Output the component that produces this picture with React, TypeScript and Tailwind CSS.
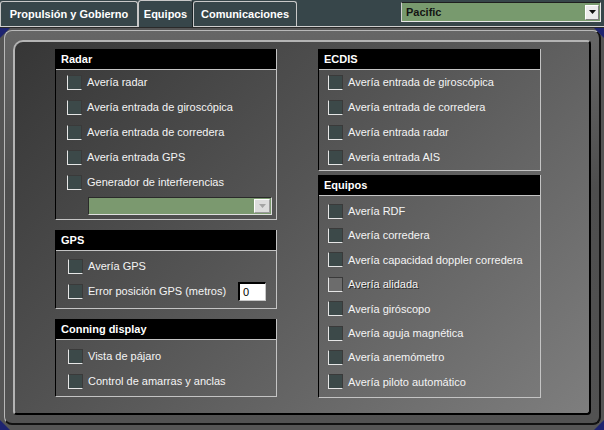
import type { ReactNode } from 'react'

const FONT = "font-['Liberation_Sans',Arial,sans-serif]"

function Tab({ label, width, active }: { label: string; width: string; active?: boolean }) {
  return (
    <div
      className={`relative flex items-center justify-center rounded-t-[3px] border-l border-t border-[#c8c8c8] text-[11px] font-bold text-white ${width} ${
        active
          ? 'z-10 -mb-[1px] h-[27px] border-r border-r-[#1c2426] bg-[#37464a]'
          : 'h-[25px] border-r bg-[#37464a]'
      }`}
    >
      {label}
    </div>
  )
}

function Check({ label, h = 'h-[25px]', dim }: { label: string; h?: string; dim?: boolean }) {
  return (
    <div className={`flex items-center ${h}`}>
      <span
        className={`h-[15px] w-[15px] shrink-0 border border-t-[#3a3a3a] border-r-[#3a3a3a] border-b-[#e6e6e6] border-l-[#e6e6e6] ${
          dim ? 'bg-[#6c6c6c]' : 'bg-[#3c4949]'
        }`}
      />
      <span
        className={`ml-[5px] text-[11px] text-[#f4f4f4] ${dim ? '[text-shadow:1px_1px_0_#2a2a2a]' : ''}`}
      >
        {label}
      </span>
    </div>
  )
}

function Group({ title, className, children }: { title: string; className?: string; children: ReactNode }) {
  return (
    <div className={`border-r border-b border-l border-r-[#c4c4c4] border-b-[#c4c4c4] border-l-black ${className ?? ''}`}>
      <div className="flex h-[21px] items-center border-b border-[#c4c4c4] bg-black pl-[5px] text-[11px] font-bold text-white">
        {title}
      </div>
      {children}
    </div>
  )
}

function Corner({ className, points }: { className: string; points: string }) {
  return (
    <svg className={`absolute h-[10px] w-[10px] ${className}`} viewBox="0 0 10 10" aria-hidden="true">
      <polygon points={points} fill="#1e2470" />
    </svg>
  )
}

export default function App() {
  return (
    <div className={`h-[430px] w-[604px] overflow-hidden bg-[#555555] ${FONT}`}>
      {/* tab bar */}
      <div className="h-[28px] bg-[#37464a]">
        <div className="flex h-[26px] items-end">
          <Tab label="Propulsión y Gobierno" width="w-[138px]" />
          <Tab label="Equipos" width="w-[55px]" active />
          <Tab label="Comunicaciones" width="w-[104px]" />
          <div className="mt-[2px] mr-[3px] ml-auto flex h-[20px] w-[200px] items-center self-start border border-t-[#1f1f1f] border-r-[#e8e8e8] border-b-[#e8e8e8] border-l-[#d0d0d0] bg-[#789a6e]">
            <span className="flex-1 pl-[4px] text-[11px] font-bold text-[#141414]">Pacific</span>
            <span className="mr-[1px] flex h-[15px] w-[14px] items-center justify-center border border-t-white border-r-[#808080] border-b-[#808080] border-l-white bg-[#ececec]">
              <svg viewBox="0 0 7 4" className="h-[4px] w-[7px]" aria-hidden="true">
                <polygon points="0,0 7,0 3.5,4" fill="#111" />
              </svg>
            </span>
          </div>
        </div>
        <div className="h-[1px] bg-[#cfcfcf]" />
        <div className="h-[1px] bg-[#2a2a2a]" />
      </div>

      {/* framed area */}
      <div className="relative h-[402px] pt-[2px] pr-[3px] pb-[5px] pl-[4px]">
        <Corner className="top-0 left-0" points="0,0 10,0 0,10" />
        <Corner className="top-0 right-0" points="0,0 10,0 10,10" />
        <Corner className="bottom-0 left-0" points="0,0 0,10 10,10" />
        <Corner className="right-0 bottom-0" points="10,0 10,10 0,10" />

        <div className="h-[395px] rounded-[8px] border-t border-r-2 border-b-2 border-l border-t-[#b8b8b8] border-r-[#111] border-b-[#111] border-l-[#b8b8b8] bg-[linear-gradient(180deg,#666666_0%,#4e4e4e_40%,#525252_100%)] px-[8px] pt-[9px]">
          <div className="flex h-[375px] w-[578px] gap-[41px] rounded-[4px] rounded-tl-[10px] border-2 border-t-[#b4b4b4] border-r-black border-b-black border-l-[#b4b4b4] bg-[linear-gradient(135deg,#363636_0%,#555555_45%,#7e7e7e_100%)] pt-[7px] pl-[40px]">
            {/* left column */}
            <div className="flex w-[222px] flex-col">
              <Group title="Radar" className="pb-[4px]">
                <div className="pl-[11px]">
                  <Check label="Avería radar" />
                  <Check label="Avería entrada de giroscópica" />
                  <Check label="Avería entrada de corredera" />
                  <Check label="Avería entrada GPS" />
                  <Check label="Generador de interferencias" />
                </div>
                <div className="mt-[2px] mr-[4px] ml-[32px] flex h-[18px] items-center border border-t-[#2a2a2a] border-r-[#e0e0e0] border-b-[#e0e0e0] border-l-[#2a2a2a] bg-[#7b996f]">
                  <span className="flex-1" />
                  <span className="mr-[1px] flex h-[14px] w-[16px] items-center justify-center border border-t-white border-r-[#9a9a9a] border-b-[#9a9a9a] border-l-white bg-[#dcdcdc]">
                    <svg viewBox="0 0 7 4" className="h-[4px] w-[7px]" aria-hidden="true">
                      <polygon points="0,0 7,0 3.5,4" fill="#a4a4a4" />
                    </svg>
                  </span>
                </div>
              </Group>

              <Group title="GPS" className="mt-[10px] pb-[4px]">
                <div className="pt-[3px] pl-[12px]">
                  <Check label="Avería GPS" />
                  <div className="flex h-[25px] items-center pr-[10px]">
                    <Check label="Error posición GPS (metros)" />
                    <div className="ml-auto flex h-[19px] w-[28px] items-center border-t-2 border-r border-b border-l-2 border-t-black border-r-[#c8c8c8] border-b-[#c8c8c8] border-l-black bg-white pl-[3px] text-[11px] text-black">
                      0
                    </div>
                  </div>
                </div>
              </Group>

              <Group title="Conning display" className="mt-[10px] pb-[2px]">
                <div className="pt-[4px] pl-[12px]">
                  <Check label="Vista de pájaro" />
                  <Check label="Control de amarras y anclas" />
                </div>
              </Group>
            </div>

            {/* right column */}
            <div className="flex w-[223px] flex-col">
              <Group title="ECDIS">
                <div className="pl-[9px]">
                  <Check label="Avería entrada de giroscópica" />
                  <Check label="Avería entrada de corredera" />
                  <Check label="Avería entrada radar" />
                  <Check label="Avería entrada AIS" />
                </div>
              </Group>

              <Group title="Equipos" className="mt-[4px] pb-[3px]">
                <div className="pt-[3px] pl-[9px]">
                  <Check h="h-[24.4px]" label="Avería RDF" />
                  <Check h="h-[24.4px]" label="Avería corredera" />
                  <Check h="h-[24.4px]" label="Avería capacidad doppler corredera" />
                  <Check h="h-[24.4px]" label="Avería alidada" dim />
                  <Check h="h-[24.4px]" label="Avería giróscopo" />
                  <Check h="h-[24.4px]" label="Avería aguja magnética" />
                  <Check h="h-[24.4px]" label="Avería anemómetro" />
                  <Check h="h-[24.4px]" label="Avería piloto automático" />
                </div>
              </Group>
            </div>
          </div>
        </div>
      </div>
    </div>
  )
}
